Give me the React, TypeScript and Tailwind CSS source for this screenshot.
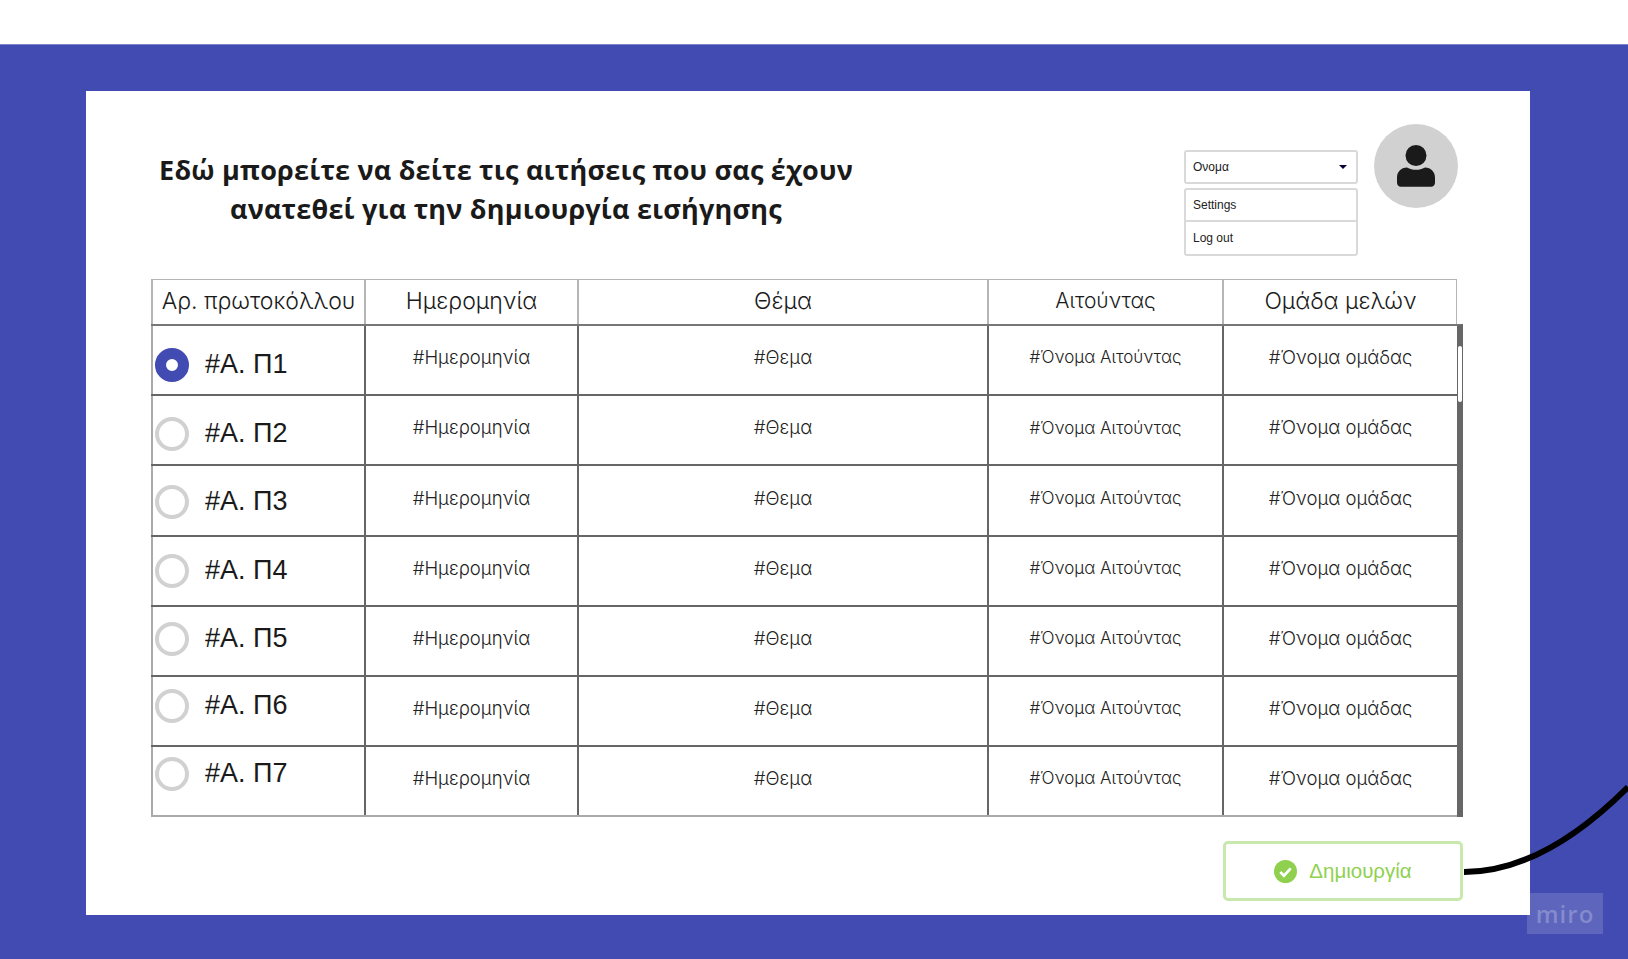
const heads = ["Αρ. πρωτοκόλλου", "Ημερομηνία", "Θέμα", "Αιτούντας", "Ομάδα μελών"];
const rows = [
  { id: "#Α. Π1", pad: "pt-[22px]", on: true },
  { id: "#Α. Π2", pad: "pt-[21px]", on: false },
  { id: "#Α. Π3", pad: "pt-[19px]", on: false },
  { id: "#Α. Π4", pad: "pt-[17px]", on: false },
  { id: "#Α. Π5", pad: "pt-[15px]", on: false },
  { id: "#Α. Π6", pad: "pt-[12px]", on: false },
  { id: "#Α. Π7", pad: "pt-[10px]", on: false },
];
const cols = "grid grid-cols-[213px_213px_410px_235px_235px]";

function DataCell({ children, cls }: { children: string; cls: string }) {
  return (
    <div className={`flex items-center justify-center pb-1 border-l-2 border-[#666] font-['Inter',sans-serif] font-light text-[#222] ${cls}`}>
      {children}
    </div>
  );
}

export default function App() {
  return (
    <div className="w-[1628px] h-[959px] overflow-hidden bg-white relative">
      <div className="h-[44px] bg-white" />
      <div className="h-[915px] bg-[#414bb2] border-t border-[#7d84cc] pt-[46px] pl-[86px]">
        <div className="w-[1444px] h-[824px] bg-white pl-[65px] pr-[67px]">
          <div className="h-[188px] flex items-start">
            <h1 className="w-[710px] pt-[59px] text-center font-['Open_Sans',sans-serif] font-bold text-[27px] leading-[39px] tracking-[0.2px] text-[#1a1a1a]">
              Εδώ μπορείτε να δείτε τις αιτήσεις που σας έχουν
              <br />
              ανατεθεί για την δημιουργία εισήγησης
            </h1>
            <div className="ml-[323px] w-[174px] pt-[59px] font-['Liberation_Sans',sans-serif] text-[12px] text-[#222]">
              <div className="h-[34px] border-2 border-[#d9d9d9] rounded-[3px] flex items-center justify-between pl-[7px] pr-[9px]">
                <span>Ονομα</span>
                <span className="w-0 h-0 border-x-[4px] border-x-transparent border-t-[4px] border-t-[#050038]" />
              </div>
              <div className="mt-[4px] border-2 border-[#d9d9d9] rounded-[3px]">
                <div className="h-[32px] flex items-center pl-[7px] border-b-2 border-[#d9d9d9]">Settings</div>
                <div className="h-[32px] flex items-center pl-[7px]">Log out</div>
              </div>
            </div>
            <div className="ml-[16px] mt-[33px] w-[84px] h-[84px] rounded-full bg-[#d1d1d1] flex items-center justify-center">
              <svg width="38" height="42" viewBox="0 0 38 42" fill="#1a1a1a">
                <circle cx="19" cy="10.5" r="10.5" />
                <path d="M10 22.5c3 1.6 5.8 2.3 9 2.3s6-.7 9-2.3c6 0 10 4.5 10 10v5c0 2.5-1.5 4.2-4 4.2H4c-2.5 0-4-1.7-4-4.2v-5c0-5.5 4-10 10-10z" />
              </svg>
            </div>
          </div>

          <div className="relative w-[1312px]">
            <div className={`${cols} w-[1306px] h-[45px] border-t border-r border-[#b5b5b5]`}>
              {heads.map((h, i) => (
                <div
                  key={h}
                  className={`flex items-center justify-center pb-[2px] font-['Inter',sans-serif] font-light text-[#1a1a1a] border-l-2 border-[#b5b5b5] ${
                    i === 3 ? "text-[21px]" : "text-[23px]"
                  }`}
                >
                  {h}
                </div>
              ))}
            </div>
            <div className="border-r-[6px] border-[#666] border-t-2 border-t-[#777]">
              {rows.map((r, i) => (
                <div key={r.id} className={`${cols} w-[1306px] h-[70.2px] ${i < 6 ? "border-b-2 border-[#666]" : "border-b-2 border-[#aaa]"}`}>
                  <div className={`flex items-start pl-[2px] border-l-2 border-[#aaa] ${r.pad}`}>
                    {r.on ? (
                      <span className="w-[34px] h-[34px] rounded-full border-[11px] border-[#414bb2] bg-white shrink-0" />
                    ) : (
                      <span className="w-[34px] h-[34px] rounded-full border-4 border-[#d1d1d1] bg-white shrink-0" />
                    )}
                    <span className="ml-[16px] -mt-[1px] leading-[34px] font-['Liberation_Sans',sans-serif] text-[27px] text-[#1a1a1a]">{r.id}</span>
                  </div>
                  <DataCell cls="text-[18.5px]">#Ημερομηνία</DataCell>
                  <DataCell cls="text-[18.5px]">#Θεμα</DataCell>
                  <DataCell cls="text-[17px]">#Όνομα Αιτούντας</DataCell>
                  <DataCell cls="text-[18.5px]">#Όνομα ομάδας</DataCell>
                </div>
              ))}
            </div>
            <div className="absolute left-[1307px] top-[67px] w-[4px] h-[56px] bg-white rounded-full" />
          </div>

          <div className="mt-[24px] ml-[1072px] w-[240px] h-[60px] border-[3px] border-[#c9e8ae] rounded-[5px] flex items-center justify-center gap-[12px] font-['Liberation_Sans',sans-serif] text-[20.5px] text-[#8fd14f]">
            <svg width="23" height="23" viewBox="0 0 22 22">
              <circle cx="11" cy="11" r="11" fill="#8fd14f" />
              <path d="M6 11.5l3.5 3.5L16 8" fill="none" stroke="#fff" strokeWidth="2.6" />
            </svg>
            <span>Δημιουργία</span>
          </div>
        </div>
      </div>

      <svg className="absolute left-[1464px] top-[780px]" width="164" height="100" viewBox="0 0 164 100" fill="none">
        <path d="M0 92C60 92 115 56 164 7" stroke="#000" strokeWidth="6" />
      </svg>
      <div className="absolute left-[1527px] top-[893px] w-[76px] h-[41px] bg-white/15 flex items-center justify-center font-['Open_Sans',sans-serif] font-semibold text-[24px] tracking-[1px] text-white/25">
        miro
      </div>
    </div>
  );
}
